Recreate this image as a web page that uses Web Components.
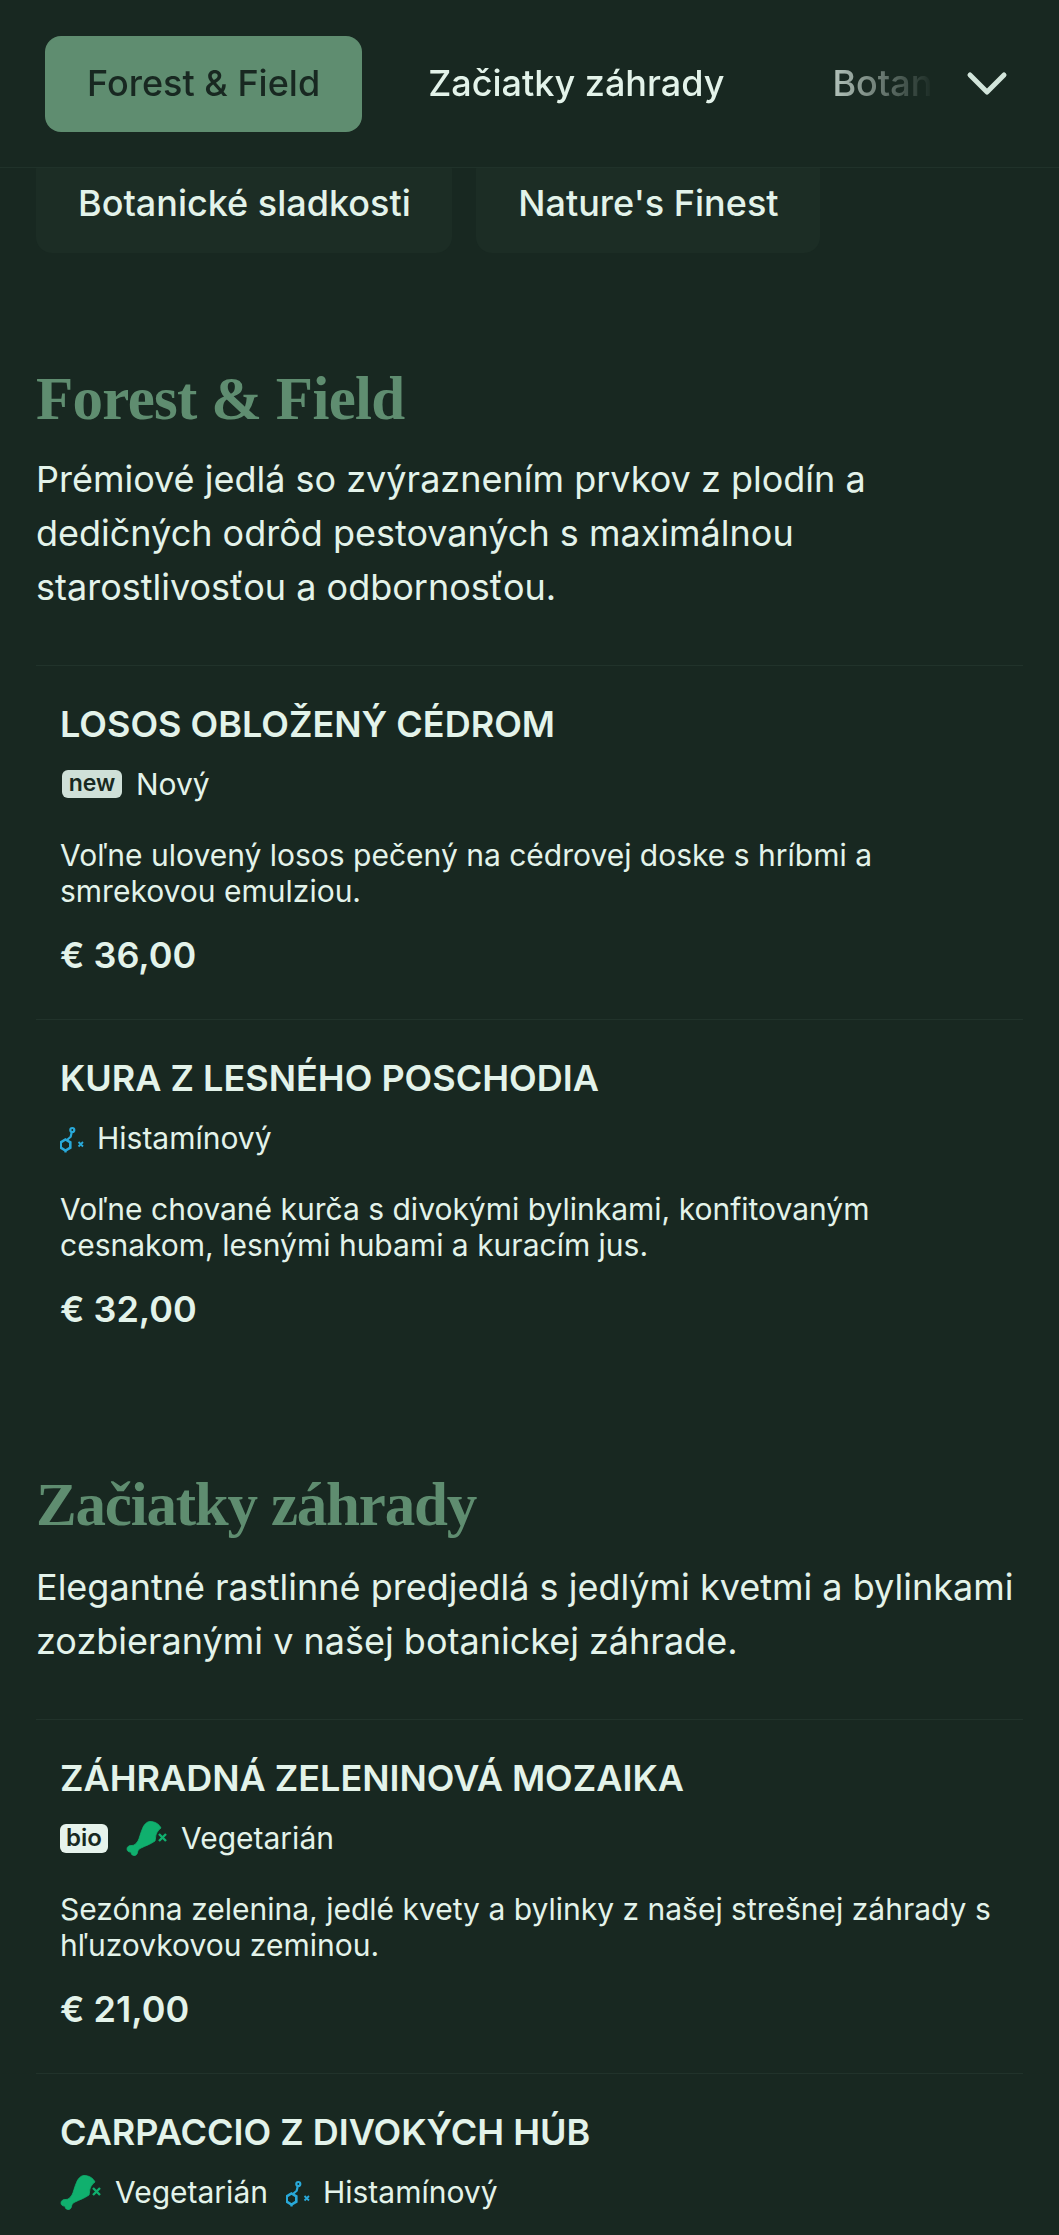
<!DOCTYPE html>
<html lang="sk"><head><meta charset="utf-8"><title>Menu</title>
<style>
html,body{margin:0;padding:0;background:#182821;color:#e3f3ea;font-family:Inter,"Liberation Sans",sans-serif;}
body{height:2235px;overflow:hidden;}
</style></head><body>
<menu-page>
  <menu-nav>
    <nav-tab active>Forest &amp; Field</nav-tab>
    <nav-tab>Začiatky záhrady</nav-tab>
    <nav-tab>Botanické sladkosti</nav-tab>
  </menu-nav>
  <overflow-row>
    <nav-card>Botanické sladkosti</nav-card>
    <nav-card>Nature's Finest</nav-card>
  </overflow-row>
  <menu-section heading="Forest &amp; Field" intro="Prémiové jedlá so zvýraznením prvkov z plodín a dedičných odrôd pestovaných s maximálnou starostlivosťou a odbornosťou.">
    <menu-item name="LOSOS OBLOŽENÝ CÉDROM" price="€ 36,00" desc="Voľne ulovený losos pečený na cédrovej doske s hríbmi a smrekovou emulziou.">
      <diet-tag kind="new">Nový</diet-tag>
    </menu-item>
    <menu-item name="KURA Z LESNÉHO POSCHODIA" price="€ 32,00" desc="Voľne chované kurča s divokými bylinkami, konfitovaným cesnakom, lesnými hubami a kuracím jus.">
      <diet-tag kind="histamine">Histamínový</diet-tag>
    </menu-item>
  </menu-section>
  <menu-section style="--track:-1.200px;--nudge:-1.500px" heading="Začiatky záhrady" intro="Elegantné rastlinné predjedlá s jedlými kvetmi a bylinkami zozbieranými v našej botanickej záhrade.">
    <menu-item name="ZÁHRADNÁ ZELENINOVÁ MOZAIKA" price="€ 21,00" desc="Sezónna zelenina, jedlé kvety a bylinky z našej strešnej záhrady s hľuzovkovou zeminou.">
      <diet-tag kind="bio"></diet-tag>
      <diet-tag kind="veg">Vegetarián</diet-tag>
    </menu-item>
    <menu-item name="CARPACCIO Z DIVOKÝCH HÚB">
      <diet-tag kind="veg">Vegetarián</diet-tag>
      <diet-tag kind="histamine">Histamínový</diet-tag>
    </menu-item>
  </menu-section>
</menu-page>
<script>
function def(name, css, html){
  class E extends HTMLElement{
    constructor(){super();this.attachShadow({mode:'open'});}
    connectedCallback(){
      const h=typeof html==='function'?html(this):html;
      this.shadowRoot.innerHTML='<style>'+css+'</style>'+h;
    }
  }
  customElements.define(name,E);
}
const esc=s=>String(s||'').replace(/&/g,'&amp;').replace(/</g,'&lt;');
def('menu-page',':host{display:block}','<slot></slot>');
def('menu-nav',`
:host{display:flex;align-items:center;position:sticky;top:0;z-index:5;height:168px;box-sizing:border-box;background:#182821;border-bottom:1px solid #20322a;padding-left:45px}
.scroll{display:flex;gap:24px;width:890px;overflow:hidden;-webkit-mask-image:linear-gradient(90deg,#000 85%,transparent 100%);mask-image:linear-gradient(90deg,#000 85%,transparent 100%)}
svg{position:absolute;left:966px;top:68px}
`,`<div class="scroll"><slot></slot></div><svg width="42" height="30" viewBox="0 0 42 30" fill="none"><path d="M4 7 21 24 38 7" stroke="#d2e5db" stroke-width="5" stroke-linecap="round" stroke-linejoin="round"/></svg>`);
def('nav-tab',`
:host{display:block;flex:none;box-sizing:border-box;height:96px;line-height:94px;padding:0 42px;border-radius:16px;font-size:36px;font-weight:500;color:#e3f3ea;white-space:nowrap}
:host([active]){background:#5f8d70;color:#182821}
`,'<slot></slot>');
def('overflow-row',`:host{display:flex;align-items:flex-start;gap:24px;padding-left:36px;margin-top:-15px;height:112px}`,'<slot></slot>');
def('nav-card',`:host{display:block;box-sizing:border-box;height:100px;padding:0 41.500px 0 42px;line-height:100px;font-size:36px;font-weight:500;border-radius:16px;background:#1c2d25;color:#e3f3ea;white-space:nowrap}`,'<slot></slot>');
def('menu-section',`
:host{display:block;padding:0 36px;margin-top:90px}
h2{margin:0;padding-top:1.500px;font:700 61px/84px "Liberation Serif",serif;color:#5f8d70;letter-spacing:var(--track,-.7px);position:relative;top:var(--nudge,0)}
p{margin:11.500px 0 0;font-size:36px;line-height:54px;color:#e3f3ea}
.list{margin-top:51px}
`,e=>`<h2>${esc(e.getAttribute('heading'))}</h2><p>${esc(e.getAttribute('intro'))}</p><div class="list"><slot></slot></div>`);
def('menu-item',`
:host{display:block;border-top:1px solid #21332b;padding:36px 24px 40px;height:354px;box-sizing:border-box}
h3{margin:0;font-size:36px;line-height:44px;font-weight:600;color:#e3f3ea}
.tags{display:flex;align-items:center;gap:18px;height:44px;margin-top:16px}
p{margin:31px 0 0;font-size:30px;line-height:36px;color:#e3f3ea}
.price{margin-top:24px;font-size:36px;line-height:44px;font-weight:600;color:#e3f3ea}
`,e=>{const d=e.getAttribute('desc'),pr=e.getAttribute('price');return `<h3>${esc(e.getAttribute('name'))}</h3><div class="tags"><slot></slot></div>`+(d?`<p>${esc(d)}</p>`:'')+(pr?`<div class="price">${esc(pr)}</div>`:'');});
const icons={
veg:`<svg class="veg" width="44" height="38" viewBox="0 0 44 38"><path d="M24 2.500C29 2.500 33 5 35 9C32 11 29.500 15 29.500 19C29.500 20 29.300 21 29 22C25 25 19 27 15 29C13 30 12 31 11.500 33C11.500 35.500 9.500 37 7.500 36.500C5.500 36 5 34.500 5 33C3 33.500 1 32 1 30C1 27.500 3.500 26 6 26.500C8 26.500 10 25 12 22C13.500 19 14.500 14 16.500 9.500C18 5.500 21 2.500 24 2.500Z" fill="#10b06e" stroke="#10b06e" stroke-width=".8"/><path d="M33 15 40 22M40 15 33 22" stroke="#10b06e" stroke-width="2.400"/></svg>`,
histamine:`<svg class="his" width="26" height="32" viewBox="0 -5 26 32" fill="none" stroke="#29a9d9" stroke-width="2.200"><circle cx="12.300" cy="3" r="2"/><path d="M11.800 5 10.700 9.700 7 13"/><path d="M5.500 12.500 10.300 15.300V20.700L5.500 23.500 .700 20.700V15.300Z" stroke-width="2.600"/><path d="M5.500 23.500V25.500"/><path d="M18.500 15 23 19.500M23 15 18.500 19.500" stroke-width="1.800"/></svg>`};
def('diet-tag',`
:host{display:inline-flex;align-items:center;gap:11px;font-size:30px;line-height:44px;color:#e3f3ea;white-space:nowrap}
.b{display:block;box-sizing:border-box;border-radius:6px;color:#182821;font-weight:600;text-align:center}
.new{width:60px;height:28px;line-height:26px;font-size:23px;background:#cfe0d8;margin:0 3px 0 2px}
.bio{width:48px;height:29px;line-height:28px;font-size:24px;background:#e6f3ec}
svg{display:block;flex:none}
`,e=>{const k=e.getAttribute('kind');
 if(k==='new')return '<span class="b new">new</span><slot></slot>';
 if(k==='bio')return '<span class="b bio">bio</span>';
 return icons[k]+'<slot></slot>';});
</script>
</body></html>
